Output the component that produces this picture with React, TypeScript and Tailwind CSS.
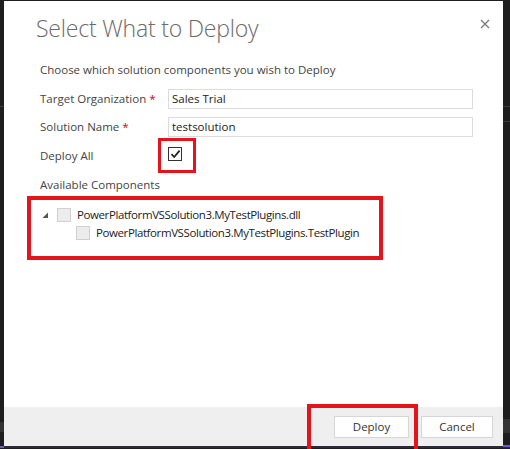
import React from "react";

const font = "font-['Open_Sans','Noto_Sans',sans-serif]";

function Field({ label, value }: { label: string; value: string }) {
    return <div className="flex items-center h-[20px]">
        <div className="w-[128px] text-[11.5px] text-[#444]">
            {label} <span className="text-[#d0021b]">*</span>
        </div>
        <div className="w-[305px] h-[20px] border border-[#dcdcdc] bg-white px-[3px] flex items-center text-[11.5px] text-[#222]">
            {value}
        </div>
    </div>
}

function GrayBox() {
    return <span className="inline-block w-[14px] h-[14px] bg-[#ececec] border border-[#cfcfcf]" />
}

export default function App() {
    return <div className={`relative w-[510px] h-[449px] bg-[#1e1e1e] overflow-hidden ${font}`}>
        {/* window chrome behind the dialog */}
        <div className="absolute left-0 top-[106px] w-[510px] h-[1px] bg-[#3c3c3c]" />
        <div className="absolute left-[503px] top-[121px] w-[7px] h-[1px] bg-[#3c3c3c]" />
        <div className="absolute left-[503px] top-[419px] w-[7px] h-[14px] bg-[#333]" />
        <div className="absolute left-0 top-[422px] w-[4px] h-[10px] bg-[#333]" />
        <div className="absolute left-0 top-[446px] w-[510px] h-[2px] bg-[#2d2a3e]" />
        <div className="absolute left-0 top-[446px] w-[4px] h-[2px] bg-[#6c5cc4]" />
        <div className="absolute left-[503px] top-[445px] w-[7px] h-[2px] bg-[#6c5cc4]" />

        <div className="relative ml-[4px] mt-[1px] w-[499px] h-[445px] bg-white flex flex-col">
            <div className="flex-1 pl-[32px] pr-[30px] pt-[10px]">
                <div className="flex justify-between">
                    <h1 className="text-[23px] leading-[34px] font-light text-[#6b6b6b] tracking-[-0.2px]">
                        Select What to Deploy
                    </h1>
                    <svg width="10" height="10" viewBox="0 0 10 10" className="mt-[8px] -mr-[17px]">
                        <path d="M1 1 L9 9 M9 1 L1 9" stroke="#7a7a7a" strokeWidth="1.3" />
                    </svg>
                </div>
                <div className="pl-[4px]">
                    <p className="mt-[17px] text-[11.5px] leading-[16px] text-[#444]">
                        Choose which solution components you wish to Deploy
                    </p>
                    <div className="mt-[11px] flex flex-col gap-[8px]">
                        <Field label="Target Organization" value="Sales Trial" />
                        <Field label="Solution Name" value="testsolution" />
                    </div>
                    <div className="mt-[9px] flex items-center h-[20px]">
                        <div className="w-[128px] text-[11.5px] text-[#444]">Deploy All</div>
                        <span className="w-[14px] h-[14px] border border-[#333] bg-white flex items-center justify-center -mt-[4px]">
                            <svg width="11" height="10" viewBox="0 0 11 10">
                                <path d="M1.5 5.2 L4.2 8 L9.6 1.6" fill="none" stroke="#222" strokeWidth="1.8" />
                            </svg>
                        </span>
                    </div>
                    <div className="mt-[11px] text-[11.5px] leading-[16px] text-[#444]">Available Components</div>
                    <div className="mt-[15px] flex flex-col gap-[4px] text-[11.5px] tracking-[-0.4px] text-[#222]">
                        <div className="flex items-center h-[14px]">
                            <svg width="7" height="7" viewBox="0 0 7 7" className="ml-[2px] mr-[8px]">
                                <path d="M6 0.5 L6 6 L0.5 6 Z" fill="#555" />
                            </svg>
                            <GrayBox />
                            <span className="ml-[6px]">PowerPlatformVSSolution3.MyTestPlugins.dll</span>
                        </div>
                        <div className="flex items-center h-[14px] pl-[36px]">
                            <GrayBox />
                            <span className="ml-[6px]">PowerPlatformVSSolution3.MyTestPlugins.TestPlugin</span>
                        </div>
                    </div>
                </div>
            </div>
            <div className="h-[39px] bg-[#efefef] flex items-center justify-end gap-[12px] pr-[10px]">
                <button className="w-[75px] h-[22px] bg-white border border-[#d6d6d6] text-[11.5px] text-[#333]">Deploy</button>
                <button className="w-[72px] h-[22px] bg-white border border-[#d6d6d6] text-[11.5px] text-[#333]">Cancel</button>
            </div>
        </div>

        {/* red annotation frames */}
        <div className="absolute left-[158px] top-[138px] w-[38px] h-[35px] border-[3px] border-[#e3141c]" />
        <div className="absolute left-[27px] top-[196px] w-[356px] h-[64px] border-[4px] border-[#e3141c]" />
        <div className="absolute left-[307px] top-[404px] w-[111px] h-[50px] border-[4px] border-[#e3141c]" />
    </div>
}
